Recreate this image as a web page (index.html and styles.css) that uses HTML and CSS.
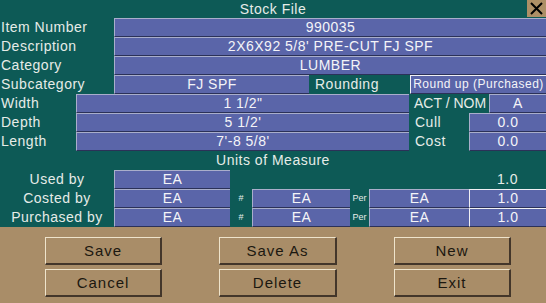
FILE: index.html
```html
<!DOCTYPE html>
<html lang="en">
<head>
    <meta charset="UTF-8">
    <meta name="viewport" content="width=device-width, initial-scale=1.0">
    <link rel="stylesheet" href="styles.css">
    <title>Stock File</title>
</head>
<body>
    <div class="janela">
        <div class="titulo">
            <span class="titulo-texto">Stock File</span>
            <button class="fechar">
                <svg width="13" height="13" viewBox="0 0 13 13">
                    <path d="M1 1 L12 12 M12 1 L1 12" stroke="#000" stroke-width="2"/>
                </svg>
            </button>
        </div>

        <div class="linha l-cheia">
            <div class="rotulo">Item Number</div>
            <div class="campo">990035</div>
        </div>
        <div class="linha l-cheia">
            <div class="rotulo">Description</div>
            <div class="campo">2X6X92 5/8' PRE-CUT FJ SPF</div>
        </div>
        <div class="linha l-cheia">
            <div class="rotulo">Category</div>
            <div class="campo">LUMBER</div>
        </div>
        <div class="linha l-sub">
            <div class="rotulo">Subcategory</div>
            <div class="campo">FJ SPF</div>
            <div class="rotulo recuo">Rounding</div>
            <div class="campo claro pequeno">Round up (Purchased)</div>
        </div>
        <div class="linha l-act">
            <div class="rotulo">Width</div>
            <div class="campo">1 1/2"</div>
            <div class="rotulo recuo justo">ACT / NOM</div>
            <div class="campo">A</div>
        </div>
        <div class="linha l-cull">
            <div class="rotulo">Depth</div>
            <div class="campo">5 1/2'</div>
            <div class="rotulo recuo">Cull</div>
            <div class="campo">0.0</div>
        </div>
        <div class="linha l-cull">
            <div class="rotulo">Length</div>
            <div class="campo">7'-8 5/8'</div>
            <div class="rotulo recuo">Cost</div>
            <div class="campo">0.0</div>
        </div>

        <div class="secao">Units of Measure</div>

        <div class="linha l-usado">
            <div class="rotulo centro">Used by</div>
            <div class="campo">EA</div>
            <div></div>
            <div class="rotulo centro">1.0</div>
        </div>
        <div class="linha l-uom">
            <div class="rotulo centro">Costed by</div>
            <div class="campo">EA</div>
            <div class="rotulo centro mini">#</div>
            <div class="campo">EA</div>
            <div class="rotulo centro mini">Per</div>
            <div class="campo">EA</div>
            <div class="campo claro">1.0</div>
        </div>
        <div class="linha l-uom">
            <div class="rotulo centro">Purchased by</div>
            <div class="campo">EA</div>
            <div class="rotulo centro mini">#</div>
            <div class="campo">EA</div>
            <div class="rotulo centro mini">Per</div>
            <div class="campo">EA</div>
            <div class="campo claro">1.0</div>
        </div>
    </div>

    <div class="acoes">
        <button class="botao">Save</button>
        <button class="botao">Save As</button>
        <button class="botao">New</button>
        <button class="botao">Cancel</button>
        <button class="botao">Delete</button>
        <button class="botao">Exit</button>
    </div>
</body>
</html>
```

FILE: styles.css
```css
body, html {
    margin: 0;
    padding: 0;
    width: 546px;
    height: 303px;
    overflow: hidden;
    background-color: #a98d68;
    font-family: "Liberation Sans", Arial, sans-serif;
    font-size: 14px;
    letter-spacing: 0.5px;
}

.janela {
    background-color: #0d5a56;
    color: #e6ece8;
}

.titulo {
    height: 18px;
    display: flex;
    align-items: center;
    justify-content: center;
    position: relative;
}

.titulo-texto {
    line-height: 18px;
}

.fechar {
    position: absolute;
    right: 0;
    top: 0;
    width: 19px;
    height: 17px;
    padding: 0;
    border: none;
    background-color: #ad8f66;
    display: flex;
    align-items: center;
    justify-content: center;
}

.linha {
    display: grid;
    height: 19px;
}

.l-cheia { grid-template-columns: 114px 1fr; }
.l-sub   { grid-template-columns: 114px 195px 101px 1fr; }
.l-act   { grid-template-columns: 76px 333px 80px 1fr; }
.l-cull  { grid-template-columns: 76px 333px 60px 1fr; }
.l-usado { grid-template-columns: 114px 116px 239px 1fr; }
.l-uom   { grid-template-columns: 114px 116px 22px 98px 19px 100px 1fr; }

.rotulo {
    line-height: 18px;
    padding-left: 1px;
    white-space: nowrap;
    overflow: hidden;
}

.recuo {
    padding-left: 6px;
}

.justo {
    padding-left: 5px;
    letter-spacing: 0;
}

.centro {
    text-align: center;
    padding-left: 0;
}

.mini {
    font-size: 9px;
    letter-spacing: 0;
}

.campo {
    background-color: #5a65a9;
    color: #f4f4f8;
    text-align: center;
    line-height: 17px;
    border-top: 1px solid #a9aecb;
    border-left: 1px solid #a9aecb;
    border-bottom: 1px solid #2b3158;
    white-space: nowrap;
    overflow: hidden;
}

.claro {
    border-top-color: #f0f0f4;
    border-left-color: #f0f0f4;
}

.pequeno {
    font-size: 12px;
    letter-spacing: 0.5px;
}

.secao {
    height: 19px;
    line-height: 19px;
    text-align: center;
}

.acoes {
    display: grid;
    grid-template-columns: 117px 118px 117px;
    grid-auto-rows: 28px;
    column-gap: 57px;
    row-gap: 4px;
    padding: 10px 0 0 45px;
}

.botao {
    font-family: "Liberation Sans", Arial, sans-serif;
    font-size: 15px;
    letter-spacing: 1px;
    color: #1c1810;
    background-color: #a98d68;
    border-top: 1px solid #efe4cc;
    border-left: 1px solid #efe4cc;
    border-bottom: 2px solid #43362a;
    border-right: 2px solid #43362a;
    padding: 0;
}
```
